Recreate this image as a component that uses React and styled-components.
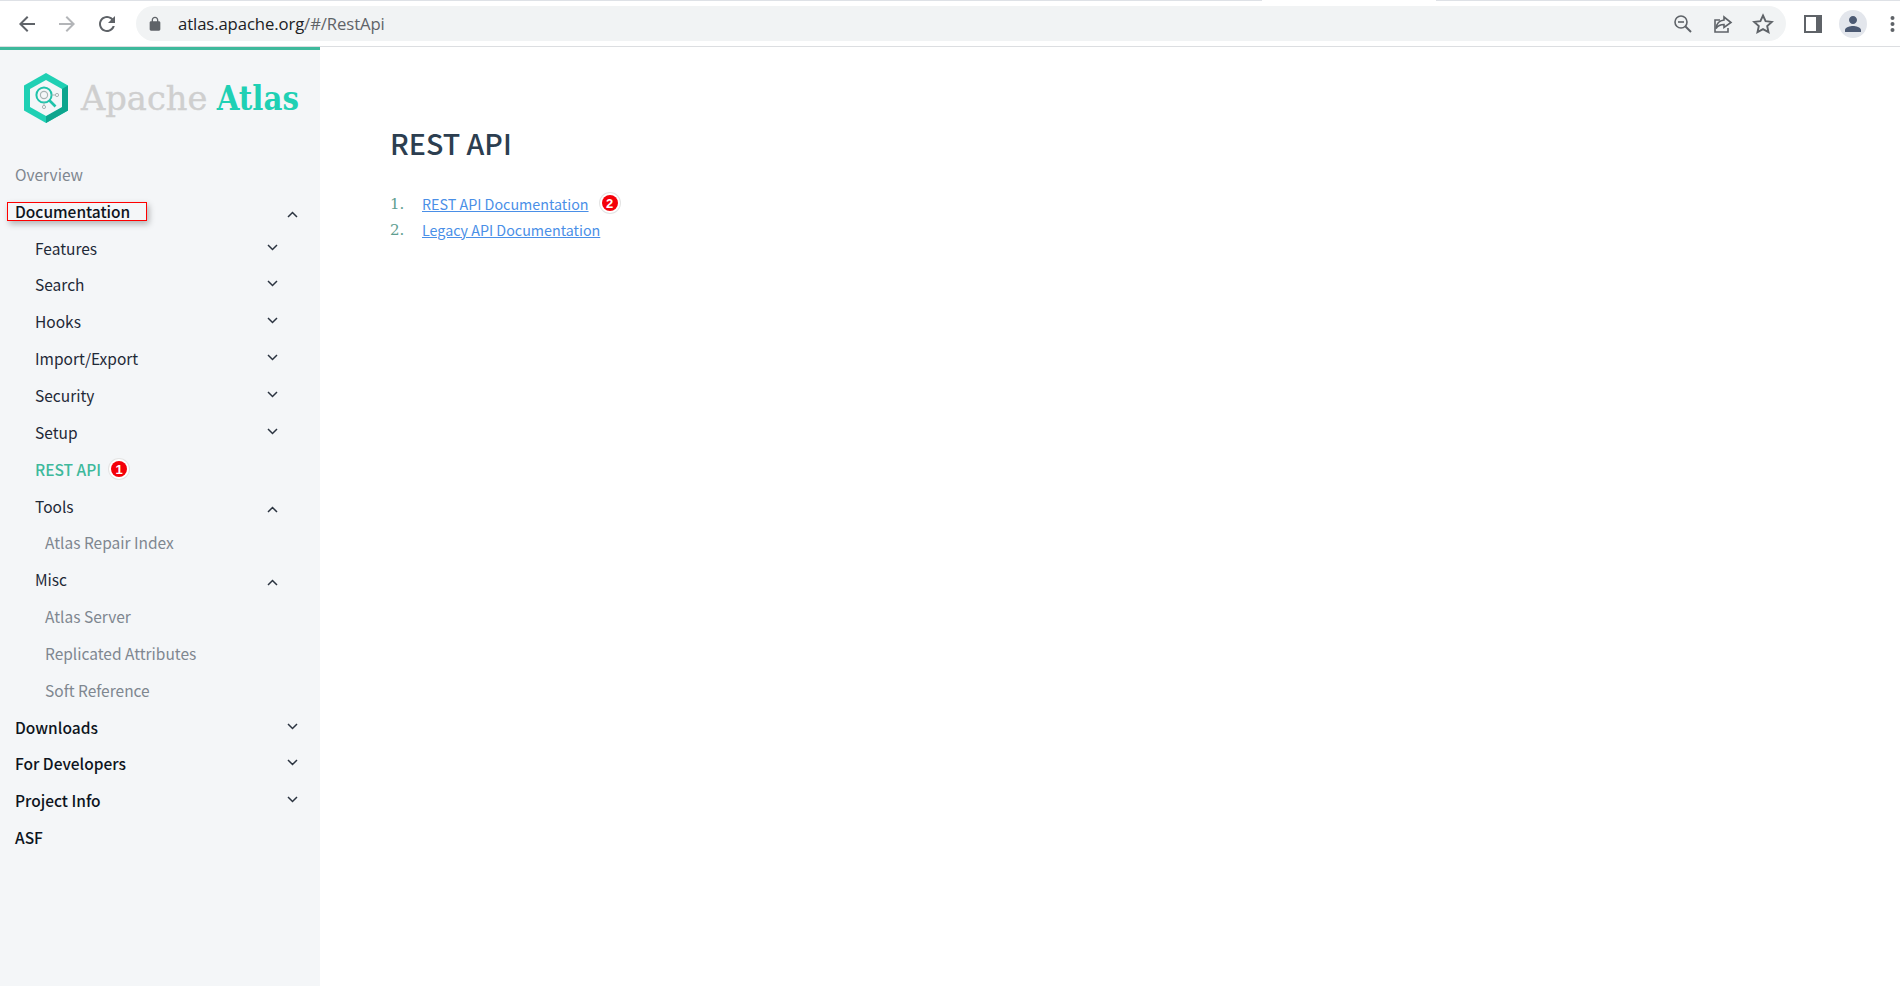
import React from 'react';
import styled, { createGlobalStyle } from 'styled-components';

const GlobalStyle = createGlobalStyle`
  html, body {
    margin: 0;
    padding: 0;
    height: 100%;
    background: #fff;
    overflow: hidden;
  }
  #root {
    height: 986px;
  }
`;

const Page = styled.div`
  display: flex;
  flex-direction: column;
  width: 1900px;
  height: 986px;
  font-family: "Noto Sans CJK SC", "Noto Sans", sans-serif;
`;

const TopBar = styled.header`
  flex: none;
  display: flex;
  align-items: center;
  box-sizing: border-box;
  height: 47px;
  padding: 1px 0 0 15px;
  background:
    linear-gradient(90deg, #dee1e6 1262px, #fff 1262px, #fff 1436px, #dee1e6 1436px) top / 100% 1px no-repeat,
    #fff;
  border-bottom: 1px solid #dcdee1;
`;

const NavIcon = styled.svg`
  flex: none;
  width: 24px;
  height: 24px;
  margin-right: ${p => p.$gap}px;
  fill: ${p => p.$color || '#5f6368'};
`;

const UrlPill = styled.div`
  flex: none;
  display: flex;
  align-items: center;
  box-sizing: border-box;
  width: 1650px;
  height: 35px;
  margin-left: 5px;
  padding: 0 12px 0 11px;
  border-radius: 18px;
  background: #f1f3f4;
`;

const LockIcon = styled.svg`
  width: 16px;
  height: 16px;
  fill: #5f6368;
  margin-right: 15px;
`;

const UrlText = styled.div`
  flex: 1;
  font-family: "Open Sans", sans-serif;
  font-size: 16.7px;
  letter-spacing: -0.1px;
  color: #5f6368;

  b {
    font-weight: 400;
    color: #202124;
  }
`;

const PillIcon = styled.svg`
  flex: none;
  width: 22px;
  height: 22px;
  margin-left: 18px;
  fill: none;
  stroke: #5f6368;
  stroke-width: 1.6;
`;

const SidePanelIcon = styled.div`
  flex: none;
  box-sizing: border-box;
  width: 18px;
  height: 18px;
  margin-left: 18px;
  border: 2px solid #5f6368;
  border-right-width: 6px;
  background: #fff;
`;

const Avatar = styled.div`
  flex: none;
  display: flex;
  align-items: center;
  justify-content: center;
  width: 28px;
  height: 28px;
  margin-left: 17px;
  border-radius: 50%;
  background: #e3e6ec;

  svg {
    width: 24px;
    height: 24px;
    fill: #4c5a73;
  }
`;

const MenuDots = styled.svg`
  flex: none;
  width: 5px;
  height: 18px;
  margin-left: 23px;
  fill: #5f6368;
`;

const Body = styled.div`
  flex: 1;
  display: flex;
  min-height: 0;
`;

const Sidebar = styled.aside`
  flex: none;
  box-sizing: border-box;
  width: 320px;
  border-top: 3px solid #3eb99c;
  background: #f4f6f8;
`;

const LogoRow = styled.div`
  display: flex;
  align-items: center;
  height: 105.5px;
  padding: 0 0 10px 24px;
  box-sizing: border-box;
`;

const LogoMark = styled.svg`
  flex: none;
  width: 44px;
  height: 50px;
  margin-right: 13px;
`;

const LogoText = styled.div`
  font-family: "DejaVu Serif", serif;
  font-size: 34px;
  font-weight: 400;
  white-space: nowrap;
  color: #cfcfcf;
  -webkit-text-stroke: 0.4px #cfcfcf;
  transform-origin: left center;
  transform: scaleX(0.99);

  b {
    display: inline-block;
    margin-left: 9px;
    font-weight: 700;
    color: #1fd0b4;
    -webkit-text-stroke: 0;
    transform-origin: left center;
    transform: scaleX(0.87);
  }
`;

const Nav = styled.nav`
  display: flex;
  flex-direction: column;
`;

const NAV_COLOR = { top: '#0d1420', sub: '#1f2937', leaf: '#7f8790', muted: '#7f8790', active: '#3eb99c' };

const Row = styled.div`
  position: relative;
  display: flex;
  align-items: center;
  box-sizing: border-box;
  height: 36.85px;
  padding-left: ${p => (p.$level === 0 ? 15 : p.$level === 1 ? 35 : 45)}px;
  padding-right: ${p => (p.$level === 0 ? 22 : 42)}px;
  font-size: 15.5px;
  font-weight: ${p => (p.$kind === 'top' ? 500 : p.$kind === 'active' ? 500 : 400)};
  color: ${p => NAV_COLOR[p.$kind]};
`;

const RowLabel = styled.span`
  flex: 1;
`;

const Chevron = styled.svg`
  flex: none;
  width: 11px;
  height: 7px;
  margin-top: ${p => (p.$up ? 7 : -1)}px;
  fill: none;
  stroke: #2b3440;
  stroke-width: 1.5;
`;

const Annotation = styled.div`
  position: absolute;
  left: 7px;
  top: 10px;
  width: 140px;
  height: 19px;
  box-sizing: border-box;
  border: 1px solid #f00;
  box-shadow: 2px 3px 6px rgba(0, 0, 0, 0.28);
  pointer-events: none;
`;

const Badge = styled.span`
  flex: none;
  display: inline-flex;
  align-items: center;
  justify-content: center;
  box-sizing: border-box;
  width: 16px;
  height: 16px;
  border-radius: 50%;
  background: #f40009;
  box-shadow: 0 0 0 2px #fff, 0 0 0 3px #e4e4e4;
  color: #fff;
  font-family: "Liberation Sans", sans-serif;
  font-size: 13px;
  font-weight: 700;
  line-height: 1;
`;

const RowBadge = styled(Badge)`
  position: absolute;
  left: 111px;
  top: 11px;
`;

const Content = styled.main`
  flex: 1;
  padding: 74px 0 0 70px;
`;

const Title = styled.h1`
  margin: 0 0 25px;
  font-size: 28.6px;
  line-height: 44px;
  font-weight: 500;
  color: #2c3e50;
`;

const Steps = styled.ol`
  list-style: none;
  margin: 0;
  padding: 0;
`;

const Step = styled.li`
  display: flex;
  align-items: center;
  height: 26px;
  font-size: 14.3px;

  span.num {
    width: 32px;
    padding-top: 2px;
    font-family: "DejaVu Serif", serif;
    font-size: 15px;
    color: #5f9e90;
  }

  a {
    color: #4a8fe7;
    text-decoration: underline;
  }

  ${Badge} {
    margin-left: 13px;
  }
`;

const navItems = [
  { label: 'Overview', level: 0, kind: 'muted' },
  { label: 'Documentation', level: 0, kind: 'top', chevron: 'up', marked: true },
  { label: 'Features', level: 1, kind: 'sub', chevron: 'down' },
  { label: 'Search', level: 1, kind: 'sub', chevron: 'down' },
  { label: 'Hooks', level: 1, kind: 'sub', chevron: 'down' },
  { label: 'Import/Export', level: 1, kind: 'sub', chevron: 'down' },
  { label: 'Security', level: 1, kind: 'sub', chevron: 'down' },
  { label: 'Setup', level: 1, kind: 'sub', chevron: 'down' },
  { label: 'REST API', level: 1, kind: 'active', badge: '1' },
  { label: 'Tools', level: 1, kind: 'sub', chevron: 'up' },
  { label: 'Atlas Repair Index', level: 2, kind: 'leaf' },
  { label: 'Misc', level: 1, kind: 'sub', chevron: 'up' },
  { label: 'Atlas Server', level: 2, kind: 'leaf' },
  { label: 'Replicated Attributes', level: 2, kind: 'leaf' },
  { label: 'Soft Reference', level: 2, kind: 'leaf' },
  { label: 'Downloads', level: 0, kind: 'top', chevron: 'down' },
  { label: 'For Developers', level: 0, kind: 'top', chevron: 'down' },
  { label: 'Project Info', level: 0, kind: 'top', chevron: 'down' },
  { label: 'ASF', level: 0, kind: 'top' },
];

const Caret = ({ dir }) => (
  <Chevron viewBox="0 0 11 7" $up={dir === 'up'}>
    <path d={dir === 'up' ? 'M1 6l4.5-4.5L10 6' : 'M1 1l4.5 4.5L10 1'} />
  </Chevron>
);

const Logo = () => (
  <LogoMark viewBox="0 0 44 50">
    <path fill="#1fd0b4" d="M22 0l22 12.5v25L22 50 0 37.5v-25z" />
    <path fill="#0da58e" d="M44 12.5v25L22 50v-7l16-9.2V16z" />
    <path fill="#f4f6f8" d="M22 7l16 9v18l-16 9-16-9V16z" />
    <g fill="none" stroke="#1fc3aa">
      <circle cx="20" cy="22" r="7.6" strokeWidth="2" />
      <circle cx="20" cy="22" r="3.6" strokeWidth="1.2" stroke="#a8b4b4" />
      <path d="M25.5 27.5l6 6" strokeWidth="2.6" />
      <path d="M27.5 22h4M20 29.5v3" strokeWidth="1" stroke="#a8b4b4" />
      <circle cx="33" cy="22" r="1.6" strokeWidth="1" stroke="#a8b4b4" />
      <circle cx="20" cy="34" r="1.6" strokeWidth="1" stroke="#a8b4b4" />
    </g>
  </LogoMark>
);

export default function App() {
  return (
    <Page>
      <GlobalStyle />
      <TopBar>
        <NavIcon viewBox="0 0 24 24" $gap={16}>
          <path d="M20 11H7.83l5.59-5.59L12 4l-8 8 8 8 1.41-1.41L7.83 13H20v-2z" />
        </NavIcon>
        <NavIcon viewBox="0 0 24 24" $gap={16} $color="#b3b5b8">
          <path d="M12 4l-1.41 1.41L16.17 11H4v2h12.17l-5.58 5.59L12 20l8-8z" />
        </NavIcon>
        <NavIcon viewBox="0 0 24 24" $gap={12}>
          <path d="M17.65 6.35C16.2 4.9 14.21 4 12 4c-4.42 0-7.99 3.58-7.99 8s3.57 8 7.99 8c3.73 0 6.84-2.55 7.73-6h-2.08c-.82 2.33-3.04 4-5.65 4-3.31 0-6-2.69-6-6s2.69-6 6-6c1.66 0 3.14.69 4.22 1.78L13 11h7V4l-2.35 2.35z" />
        </NavIcon>
        <UrlPill>
          <LockIcon viewBox="0 0 24 24">
            <path d="M18 8h-1V6c0-2.76-2.24-5-5-5S7 3.24 7 6v2H6c-1.1 0-2 .9-2 2v10c0 1.1.9 2 2 2h12c1.1 0 2-.9 2-2V10c0-1.1-.9-2-2-2zM9 6c0-1.66 1.34-3 3-3s3 1.34 3 3v2H9V6z" />
          </LockIcon>
          <UrlText><b>atlas.apache.org</b>/#/RestApi</UrlText>
          <PillIcon viewBox="0 0 22 22">
            <circle cx="9" cy="9" r="6" />
            <path d="M6 9h6" />
            <path d="M13.5 13.5l5.5 5.5" strokeWidth="2" />
          </PillIcon>
          <PillIcon viewBox="0 0 22 22">
            <path d="M8 7H3v12h13v-4" />
            <path d="M12 4l7 5.5-7 5v-3c-3.5 0-6 1-8 4 .5-4.500 3.500-8 8-8.500z" />
          </PillIcon>
          <PillIcon viewBox="0 0 22 22">
            <path d="M11 2.500l2.600 5.700 6.200.7-4.600 4.200 1.300 6.100L11 16.100l-5.500 3.100 1.300-6.100-4.600-4.200 6.200-.7z" strokeWidth="1.9" />
          </PillIcon>
        </UrlPill>
        <SidePanelIcon />
        <Avatar>
          <svg viewBox="0 0 24 24">
            <path d="M12 12c2.210 0 4-1.790 4-4s-1.790-4-4-4-4 1.790-4 4 1.790 4 4 4zm0 2c-2.670 0-8 1.340-8 4v2h16v-2c0-2.660-5.330-4-8-4z" />
          </svg>
        </Avatar>
        <MenuDots viewBox="0 0 5 18">
          <circle cx="2.500" cy="3" r="2" />
          <circle cx="2.500" cy="9" r="2" />
          <circle cx="2.500" cy="15" r="2" />
        </MenuDots>
      </TopBar>
      <Body>
        <Sidebar>
          <LogoRow>
            <Logo />
            <LogoText>Apache<b>Atlas</b></LogoText>
          </LogoRow>
          <Nav>
            {navItems.map(item => (
              <Row key={item.label} $level={item.level} $kind={item.kind}>
                <RowLabel>{item.label}</RowLabel>
                {item.badge && <RowBadge>{item.badge}</RowBadge>}
                {item.chevron && <Caret dir={item.chevron} />}
                {item.marked && <Annotation />}
              </Row>
            ))}
          </Nav>
        </Sidebar>
        <Content>
          <Title>REST API</Title>
          <Steps>
            <Step>
              <span className="num">1.</span>
              <a>REST API Documentation</a>
              <Badge>2</Badge>
            </Step>
            <Step>
              <span className="num">2.</span>
              <a>Legacy API Documentation</a>
            </Step>
          </Steps>
        </Content>
      </Body>
    </Page>
  );
}
